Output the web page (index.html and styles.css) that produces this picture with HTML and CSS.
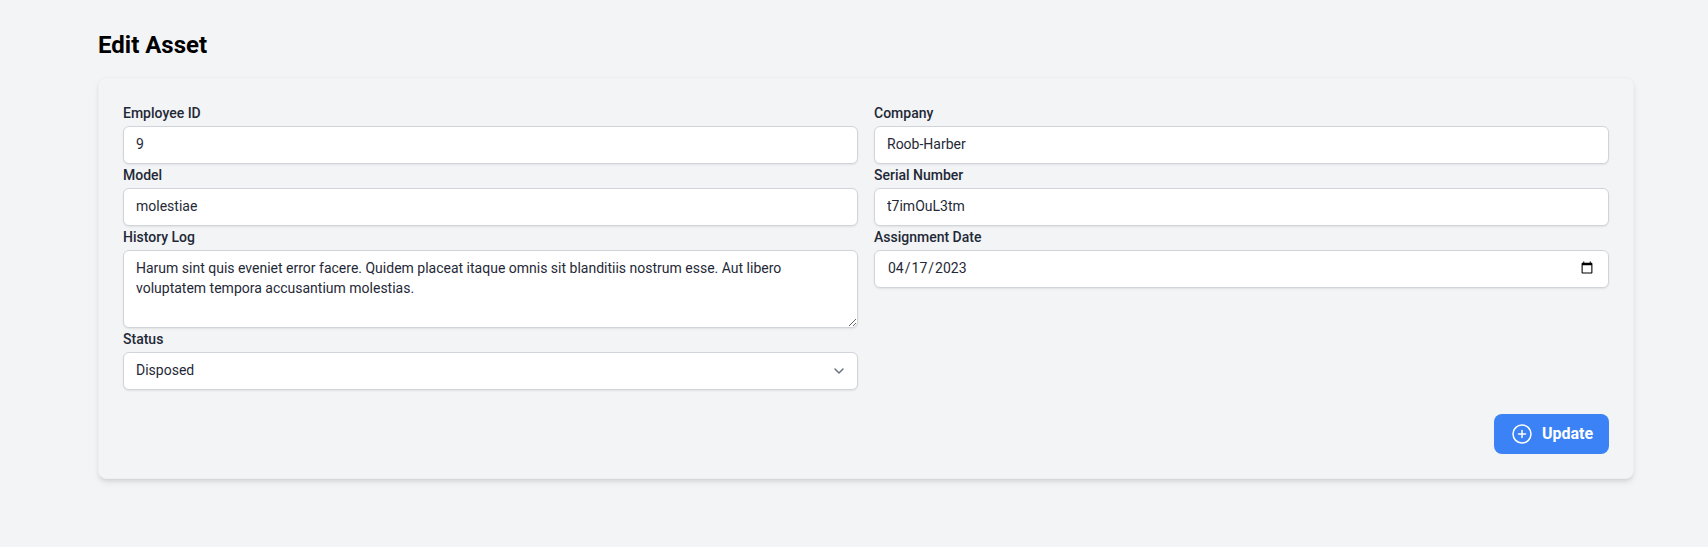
FILE: index.html
```html
<!DOCTYPE html>
<html lang="en">
<head>
<meta charset="utf-8">
<title>Edit Asset</title>
<link rel="stylesheet" href="styles.css">
</head>
<body>
<main class="page">
  <h1 class="title">Edit Asset</h1>
  <form class="card">
    <div class="grid">
      <div class="field">
        <label class="label" for="emp">Employee ID</label>
        <input class="control" id="emp" type="text" value="9">
      </div>
      <div class="field">
        <label class="label" for="company">Company</label>
        <input class="control" id="company" type="text" value="Roob-Harber">
      </div>
      <div class="field">
        <label class="label" for="model">Model</label>
        <input class="control" id="model" type="text" value="molestiae">
      </div>
      <div class="field">
        <label class="label" for="serial">Serial Number</label>
        <input class="control" id="serial" type="text" value="t7imOuL3tm">
      </div>
      <div class="field">
        <label class="label" for="log">History Log</label>
        <textarea class="control area" id="log" rows="3">Harum sint quis eveniet error facere. Quidem placeat itaque omnis sit blanditiis nostrum esse. Aut libero voluptatem tempora accusantium molestias.</textarea>
      </div>
      <div class="field">
        <label class="label" for="date">Assignment Date</label>
        <input class="control" id="date" type="date" value="2023-04-17">
      </div>
      <div class="field">
        <label class="label" for="status">Status</label>
        <div class="select-wrap">
          <select class="control select" id="status">
            <option>Disposed</option>
          </select>
          <svg class="chevron" width="20" height="20" viewBox="0 0 20 20" fill="none" aria-hidden="true">
            <path d="M6 8l4 4 4-4" stroke="#6b7280" stroke-width="1.5" stroke-linecap="round" stroke-linejoin="round"/>
          </svg>
        </div>
      </div>
    </div>
    <div class="actions">
      <button class="btn" type="button">
        <svg class="btn-icon" width="24" height="24" viewBox="0 0 24 24" fill="none" aria-hidden="true">
          <circle cx="12" cy="12" r="9" stroke="#fff" stroke-width="1.5"/>
          <path d="M12 8.5v7M8.5 12h7" stroke="#fff" stroke-width="1.5" stroke-linecap="round"/>
        </svg>
        <span>Update</span>
      </button>
    </div>
  </form>
</main>
</body>
</html>
```
FILE: styles.css
```css
* {
  box-sizing: border-box;
}

html,
body {
  margin: 0;
  height: 100%;
}

body {
  background: #f3f4f6;
  color: #111827;
  font-family: Roboto, "Liberation Sans", sans-serif;
  overflow: hidden;
}

.page {
  width: 1536px;
  margin-left: 98px;
  padding-top: 29px;
}

.title {
  margin: 0 0 16px;
  font-size: 24px;
  line-height: 32px;
  font-weight: 700;
  color: #000;
}

.card {
  padding: 24px;
  background: #f3f4f6;
  border: 1px solid #eeeff2;
  border-radius: 8px;
  box-shadow: 0 4px 6px -1px rgba(0, 0, 0, 0.1), 0 2px 4px -2px rgba(0, 0, 0, 0.1);
}

.grid {
  display: grid;
  grid-template-columns: 1fr 1fr;
  column-gap: 16px;
  align-items: start;
}

.label {
  display: block;
  padding-top: 1px;
  margin-bottom: 3px;
  font-size: 14px;
  line-height: 20px;
  font-weight: 500;
  color: #1f2937;
}

.control {
  display: block;
  width: 100%;
  height: 38px;
  padding: 7px 12px 9px;
  background: #fff;
  border: 1px solid #d1d5db;
  border-radius: 6px;
  box-shadow: 0 1px 2px 0 rgba(0, 0, 0, 0.08);
  font-family: inherit;
  font-size: 14px;
  line-height: 20px;
  color: #1f2937;
  outline: none;
}

.area {
  height: 78px;
  resize: vertical;
}

.select-wrap {
  position: relative;
}

.select {
  appearance: none;
  padding-right: 40px;
}

.chevron {
  position: absolute;
  top: 9px;
  right: 9px;
  pointer-events: none;
}

.actions {
  display: flex;
  justify-content: flex-end;
  margin-top: 24px;
}

.btn {
  display: flex;
  align-items: center;
  gap: 8px;
  height: 40px;
  width: 115px;
  padding: 0 16px;
  background: #3b82f6;
  border: 0;
  border-radius: 8px;
  color: #fff;
  font-family: inherit;
  font-size: 16px;
  line-height: 24px;
  font-weight: 700;
}

.btn-icon {
  flex: none;
}
```
